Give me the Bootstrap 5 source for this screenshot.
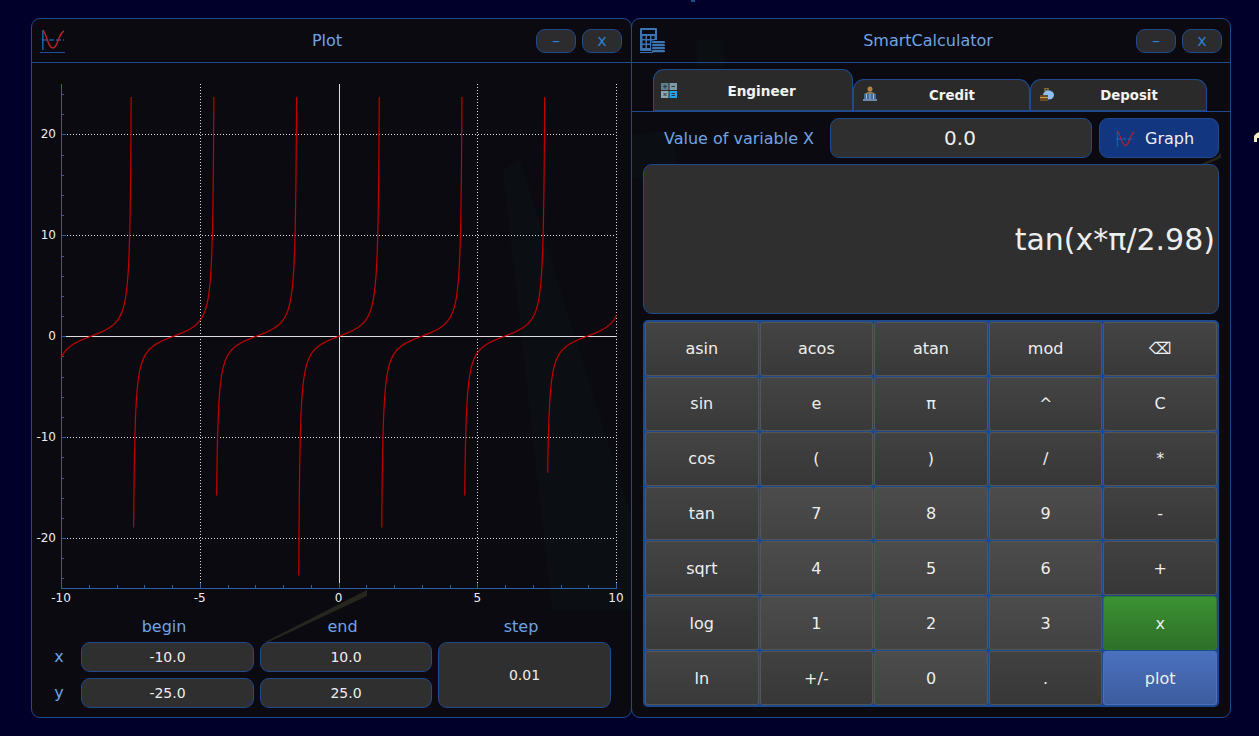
<!DOCTYPE html>
<html lang="en">
<head>
  <meta charset="UTF-8" />
  <meta name="viewport" content="width=device-width, initial-scale=1" />
  <title>SmartCalculator</title>

  <link href="https://cdn.jsdelivr.net/npm/bootstrap@5.3.0/dist/css/bootstrap.min.css" rel="stylesheet" />

  <style>
    html, body {
      height: 100%;
      overflow: hidden;
    }
    body {
      font-family: "DejaVu Sans", sans-serif;
      background-color: #00002a;
      color: #eee;
    }
    .wallpaper {
      position: absolute;
      left: 0;
      top: 0;
      pointer-events: none;
    }
    .desktop {
      position: relative;
      padding: 18px 0 0 31px;
    }
    .app-window {
      width: 601px;
      height: 700px;
      background: rgba(11, 11, 13, .9);
      border: 1px solid #1f4a8c;
      border-radius: 9px;
    }
    .app-window + .app-window {
      width: 600px;
      margin-left: -1px;
    }
    .title-bar {
      height: 44px;
      padding: 0 8px;
      border-bottom: 1px solid #1f4a8c;
    }
    .plot-window .title-bar {
      padding-right: 9px;
    }
    .title-icon {
      width: 26px;
      height: 26px;
      margin-top: 1px;
      flex: none;
    }
    .title-text {
      font-size: 16px;
      color: #70a4e2;
      text-align: center;
      padding-left: 54px;
    }
    .plot-window .title-text {
      padding-left: 52px;
    }
    .win-gap {
      gap: 6px;
    }
    .win-btn {
      width: 40px;
      height: 24px;
      padding: 0;
      font-size: 16px;
      line-height: 22px;
      color: #2a7fd0;
      background: #2c2c2e;
      border: 1px solid #1f4a8c;
      border-radius: 9px;
    }
    .blue-label {
      color: #70a4e2;
      font-size: 16px;
    }
    .field {
      display: flex;
      align-items: center;
      justify-content: center;
      background: #2f2f2f;
      border: 1px solid #1f4a8c;
      border-radius: 9px;
      color: #eee;
      padding: 0;
      font-size: 14px;
    }
    .plot-svg {
      display: block;
    }
    .plot-svg text {
      font-family: "DejaVu Sans", sans-serif;
      font-size: 12px;
      fill: #eee;
    }
    .range-form {
      display: grid;
      grid-template-columns: 43px 173px 172px 173px;
      grid-template-rows: 27px 30px 30px;
      column-gap: 6px;
      row-gap: 6px;
      margin-top: -1px;
    }
    .range-form .blue-label {
      display: flex;
      align-items: center;
      justify-content: center;
    }
    .range-form .head-label {
      align-items: flex-end;
      padding-right: 7px;
      margin-bottom: -3px;
    }
    .axis-name {
      padding-left: 11px;
    }
    .step-field {
      grid-row: span 2;
    }
    .calc-tabs {
      margin-top: 6px;
      padding-left: 21px;
      height: 43px;
      align-items: flex-end;
      border-bottom: 1px solid #1f4a8c;
    }
    .calc-tabs .nav-link {
      display: flex;
      align-items: center;
      width: 177px;
      height: 33px;
      margin: 0 0 -1px;
      padding: 2px 2px 0 9px;
      font-size: 13.3px;
      font-weight: 700;
      color: #f2f2f2;
      background: #2a2a2a;
      border: 1px solid #1f4a8c;
      border-bottom-width: 2px;
      border-radius: 11px 11px 0 0;
    }
    .calc-tabs .nav-link.active {
      width: 200px;
      height: 43px;
      font-size: 13.6px;
      color: #f2f2f2;
      background: #2a2a2a;
      border-color: #1f4a8c;
      padding: 2px 6px 0 7px;
    }
    .calc-tabs .tab-pic {
      flex: none;
      margin-top: -4px;
    }
    .calc-tabs .bank-pic {
      margin-top: -6px;
    }
    .calc-tabs .nav-link.active .tab-pic {
      margin-top: -2px;
    }
    .calc-tabs .nav-link span {
      flex-grow: 1;
      text-align: center;
    }
    .calc-body {
      padding: 6px 11px 0;
    }
    .var-label {
      width: 187px;
      padding-left: 5px;
      padding-top: 1px;
      text-align: center;
    }
    .var-field {
      width: 262px;
      height: 40px;
      font-size: 20px;
      padding-right: 2px;
    }
    .graph-btn {
      width: 120px;
      height: 40px;
      margin-left: 7px;
      padding: 1px 0 0 15px;
      font-size: 16px;
      color: #eee;
      background: #12367f;
      border: 1px solid #1f4a8c;
      border-radius: 9px;
    }
    .graph-text {
      margin-left: 1px;
    }
    .expr-screen {
      height: 150px;
      margin-top: 6px;
      padding: 0 3px 0 0;
      justify-content: flex-end;
      font-size: 30px;
    }
    .keypad {
      grid-template-columns: repeat(5, 1fr);
      grid-auto-rows: 1fr;
      gap: 1px;
      height: 387px;
      margin-top: 6px;
      padding: 2px;
      background: #1c4a8f;
      border-radius: 5px;
    }
    .key {
      padding: 1px 0 0;
      font-size: 16px;
      color: #eee;
      background: linear-gradient(#444, #393939);
      border: 1px solid #555;
      border-radius: 3px;
    }
    .key-digit {
      background: linear-gradient(#4c4c4c, #424242);
    }
    .key-op {
      background: linear-gradient(#414141, #373737);
    }
    .key-x {
      background: linear-gradient(#3b9232, #2d6f28);
      border-color: #2f7a2a;
    }
    .key-plot {
      background: linear-gradient(#4a70be, #3d5c9f);
      border-color: #4a70be;
    }
  </style>
</head>
<body>

  <!-- Wallpaper seen through the windows -->
  <svg class="wallpaper" width="1259" height="736" viewBox="0 0 1259 736">
    <polygon points="503,170 520,160 632,520 632,610 552,610" fill="#14604f" opacity=".5" />
    <polygon points="632,135 672,130 680,178 632,178" fill="#14604f" opacity=".5" />
    <polygon points="697,40 724,40 724,66 697,66" fill="#14604f" opacity=".6" />
    <path d="M1254 142 v-6 q2 -3 5 -4 v6 h-2 v4 z" fill="#f3eec0" />
    <rect x="691" y="0" width="4" height="2" fill="#1f4a8c" />
  </svg>

  <!-- Shared icons -->
  <svg width="0" height="0" class="position-absolute">
    <symbol id="wave-icon" viewBox="0 0 26 20">
      <rect x="2" y="0" width="1.600" height="20" fill="#0f5fa8" />
      <path d="M2 10 H24" stroke="#1a80d0" stroke-width="1" stroke-dasharray="5 2" fill="none" />
      <path d="M3 0 C7 5 8 18 13 18 C18 18 18 4 24 1" stroke="#c02028" stroke-width="1.400" fill="none" />
    </symbol>
  </svg>

  <div class="desktop d-flex">

    <!-- Plot window -->
    <section class="app-window plot-window">
      <div class="title-bar d-flex align-items-center">
        <svg class="title-icon" viewBox="0 0 26 26">
          <use href="#wave-icon" x="0" y="2" width="26" height="20" />
          <rect x="0" y="24" width="25" height="1" fill="#1f4f99" />
        </svg>
        <div class="title-text flex-grow-1">Plot</div>
        <div class="d-flex win-gap">
          <button class="btn win-btn">–</button>
          <button class="btn win-btn">x</button>
        </div>
      </div>
      <svg class="plot-svg" id="plot" width="598" height="547" viewBox="32 63 598 547"></svg>
      <div class="range-form">
        <div></div>
        <div class="blue-label head-label">begin</div>
        <div class="blue-label head-label">end</div>
        <div class="blue-label head-label">step</div>
        <div class="blue-label axis-name">x</div>
        <div class="field">-10.0</div>
        <div class="field">10.0</div>
        <div class="field step-field">0.01</div>
        <div class="blue-label axis-name">y</div>
        <div class="field">-25.0</div>
        <div class="field">25.0</div>
      </div>
    </section>

    <!-- Calculator window -->
    <section class="app-window">
      <div class="title-bar d-flex align-items-center">
        <svg class="title-icon" viewBox="0 0 26 26">
          <rect x="0" y="0" width="17" height="23" rx="1" fill="#3d73b0" />
          <rect x="2" y="2" width="13" height="4" fill="#0a0a10" />
          <g fill="#0a0a10">
            <rect x="2.500" y="8" width="3" height="3" /><rect x="7" y="8" width="3" height="3" /><rect x="11.500" y="8" width="3" height="3" />
            <rect x="2.500" y="12.500" width="3" height="3" /><rect x="7" y="12.500" width="3" height="3" /><rect x="11.500" y="12.500" width="3" height="3" />
            <rect x="2.500" y="17" width="3" height="3" /><rect x="7" y="17" width="3" height="3" />
          </g>
          <rect x="11" y="12" width="15" height="13" rx="5" fill="#0a0a10" />
          <g fill="#3d73b0">
            <rect x="12" y="13" width="13" height="2.200" rx="1" /><rect x="12" y="16" width="13" height="2.200" rx="1" />
            <rect x="12" y="19" width="13" height="2.200" rx="1" /><rect x="12" y="22" width="13" height="2.200" rx="1" />
          </g>
          <rect x="0" y="24" width="13" height="1" fill="#3d73b0" />
        </svg>
        <div class="title-text flex-grow-1">SmartCalculator</div>
        <div class="d-flex win-gap">
          <button class="btn win-btn">–</button>
          <button class="btn win-btn">x</button>
        </div>
      </div>

      <ul class="nav nav-tabs calc-tabs">
        <li class="nav-item">
          <a class="nav-link active" href="#">
            <svg class="tab-pic" width="16" height="15" viewBox="0 0 16 15">
              <rect x="0" y="0" width="7.500" height="7" fill="#5f7f8c" /><rect x="8.500" y="0" width="7.500" height="7" fill="#7f9aa6" />
              <rect x="0" y="8" width="7.500" height="7" fill="#8fa6b0" /><rect x="8.500" y="8" width="7.500" height="7" fill="#1ba6ee" />
              <path d="M2 3.500H6M4 1.500V5.500M10.500 3.500H14M2.500 10l3 3M5.500 10l-3 3M10.500 10.500H14M10.500 12.500H14" stroke="#2a3a40" stroke-width="1" />
            </svg>
            <span>Engineer</span>
          </a>
        </li>
        <li class="nav-item">
          <a class="nav-link" href="#">
            <svg class="tab-pic bank-pic" width="14" height="15" viewBox="0 0 14 15">
              <circle cx="7" cy="3" r="2.500" fill="#b8843c" />
              <path d="M1 8 L7 5 L13 8 Z" fill="#8a7a5c" />
              <rect x="1" y="8" width="12" height="5" fill="#3f6a9c" />
              <path d="M3.500 8V13M7 8V13M10.500 8V13" stroke="#a8bcd4" stroke-width="1" />
              <rect x="0" y="13" width="14" height="2" fill="#6f8aac" />
            </svg>
            <span>Credit</span>
          </a>
        </li>
        <li class="nav-item">
          <a class="nav-link" href="#">
            <svg class="tab-pic" width="14" height="13" viewBox="0 0 14 13">
              <rect x="5" y="0" width="3" height="3" fill="none" stroke="#b8944c" stroke-width="1" />
              <ellipse cx="8.500" cy="7" rx="5.500" ry="4.500" fill="#8cc0f4" />
              <rect x="0" y="7" width="8" height="6" fill="#6a4a20" />
              <rect x="0" y="9" width="8" height="1" fill="#c8a050" />
            </svg>
            <span>Deposit</span>
          </a>
        </li>
      </ul>

      <div class="calc-body">
        <div class="d-flex align-items-center">
          <div class="blue-label var-label">Value of variable X</div>
          <div class="field var-field">0.0</div>
          <button class="btn graph-btn d-flex align-items-center gap-2">
            <svg width="21" height="16" viewBox="0 0 26 20"><use href="#wave-icon" /></svg>
            <span class="graph-text">Graph</span>
          </button>
        </div>
        <div class="field expr-screen">tan(x*π/2.98)</div>
        <div class="keypad d-grid" id="keypad"></div>
      </div>
    </section>
  </div>

  <!-- Wallpaper streak, painted over the glass of the windows -->
  <svg class="wallpaper" width="1259" height="736" viewBox="0 0 1259 736">
    <polygon points="265,642 269,642 367,596 367,590" fill="#26261f" />
    <polygon points="1201,164 1207,164 1221,158 1221,153 1215,158" fill="#26261f" />
  </svg>

  <script src="https://cdn.jsdelivr.net/npm/bootstrap@5.3.0/dist/js/bootstrap.bundle.min.js"></script>

  <script>
    // keypad
    const keys = [
      ['asin', ''], ['acos', ''], ['atan', ''], ['mod', ''], ['⌫', ''],
      ['sin', ''], ['e', ''], ['π', ''], ['^', ''], ['C', ''],
      ['cos', ''], ['(', 'key-op'], [')', 'key-op'], ['/', 'key-op'], ['*', 'key-op'],
      ['tan', ''], ['7', 'key-digit'], ['8', 'key-digit'], ['9', 'key-digit'], ['-', 'key-op'],
      ['sqrt', ''], ['4', 'key-digit'], ['5', 'key-digit'], ['6', 'key-digit'], ['+', 'key-op'],
      ['log', ''], ['1', 'key-digit'], ['2', 'key-digit'], ['3', 'key-digit'], ['x', 'key-x'],
      ['ln', ''], ['+/-', 'key-op'], ['0', 'key-digit'], ['.', 'key-op'], ['plot', 'key-plot']
    ];
    document.getElementById('keypad').innerHTML = keys
      .map(([label, cls]) => `<button class="btn key ${cls}">${label}</button>`)
      .join('');

    // plot, drawn in page coordinates
    const px = x => 338.5 + x * 27.75;
    const py = y => 336.25 - y * 10.09;
    let out = '';

    for (const x of [-5, 5, 10]) {
      const sx = Math.round(px(x)) + 0.5;
      out += `<line x1="${sx}" x2="${sx}" y1="84" y2="588" stroke="#ddd" stroke-dasharray="1 2" />`;
    }
    for (const y of [-20, -10, 10, 20]) {
      const sy = Math.round(py(y)) + 0.5;
      out += `<line x1="61" x2="616" y1="${sy}" y2="${sy}" stroke="#ddd" stroke-dasharray="1 2" />`;
    }
    out += `<line x1="339.5" x2="339.5" y1="84" y2="588" stroke="#ddd" />`;
    out += `<line x1="61" x2="616" y1="336.5" y2="336.5" stroke="#ddd" />`;

    // axes and ticks
    out += `<line x1="61.5" x2="61.5" y1="84" y2="589" stroke="#2a5fa8" />`;
    out += `<line x1="61" x2="617" y1="588.5" y2="588.5" stroke="#2a5fa8" />`;
    for (let y = -24; y <= 24; y += 2) {
      const sy = Math.round(py(y)) + 0.5;
      out += `<line x1="61" x2="${y % 10 === 0 ? 66 : 64}" y1="${sy}" y2="${sy}" stroke="#2a5fa8" />`;
    }
    for (let x = -10; x <= 10; x++) {
      const sx = Math.round(px(x)) + 0.5;
      out += `<line x1="${sx}" x2="${sx}" y1="588" y2="${x % 5 === 0 ? 583 : 585}" stroke="#2a5fa8" />`;
    }
    for (const y of [-20, -10, 0, 10, 20]) {
      out += `<text x="56" y="${py(y) + 4}" text-anchor="end">${y}</text>`;
    }
    for (const x of [-10, -5, 0, 5, 10]) {
      out += `<text x="${px(x)}" y="602" text-anchor="middle">${x}</text>`;
    }

    // tan(x*pi/2.98), one polyline per branch, step 0.01
    const branches = [[-10, -7.49], [-7.4, -4.51], [-4.41, -1.53], [-1.45, 1.45], [1.54, 4.43], [4.53, 7.41], [7.52, 10]];
    for (const [from, to] of branches) {
      const pts = [];
      const n = Math.round((to - from) * 100);
      for (let i = 0; i <= n; i++) {
        const x = from + i / 100;
        pts.push((px(x) + 0.5).toFixed(2) + ',' + py(Math.tan(x * Math.PI / 2.98)).toFixed(2));
      }
      out += `<polyline points="${pts.join(' ')}" fill="none" stroke="#c80000" stroke-width="1.2" />`;
    }
    document.getElementById('plot').innerHTML = out;
  </script>
</body>
</html>
